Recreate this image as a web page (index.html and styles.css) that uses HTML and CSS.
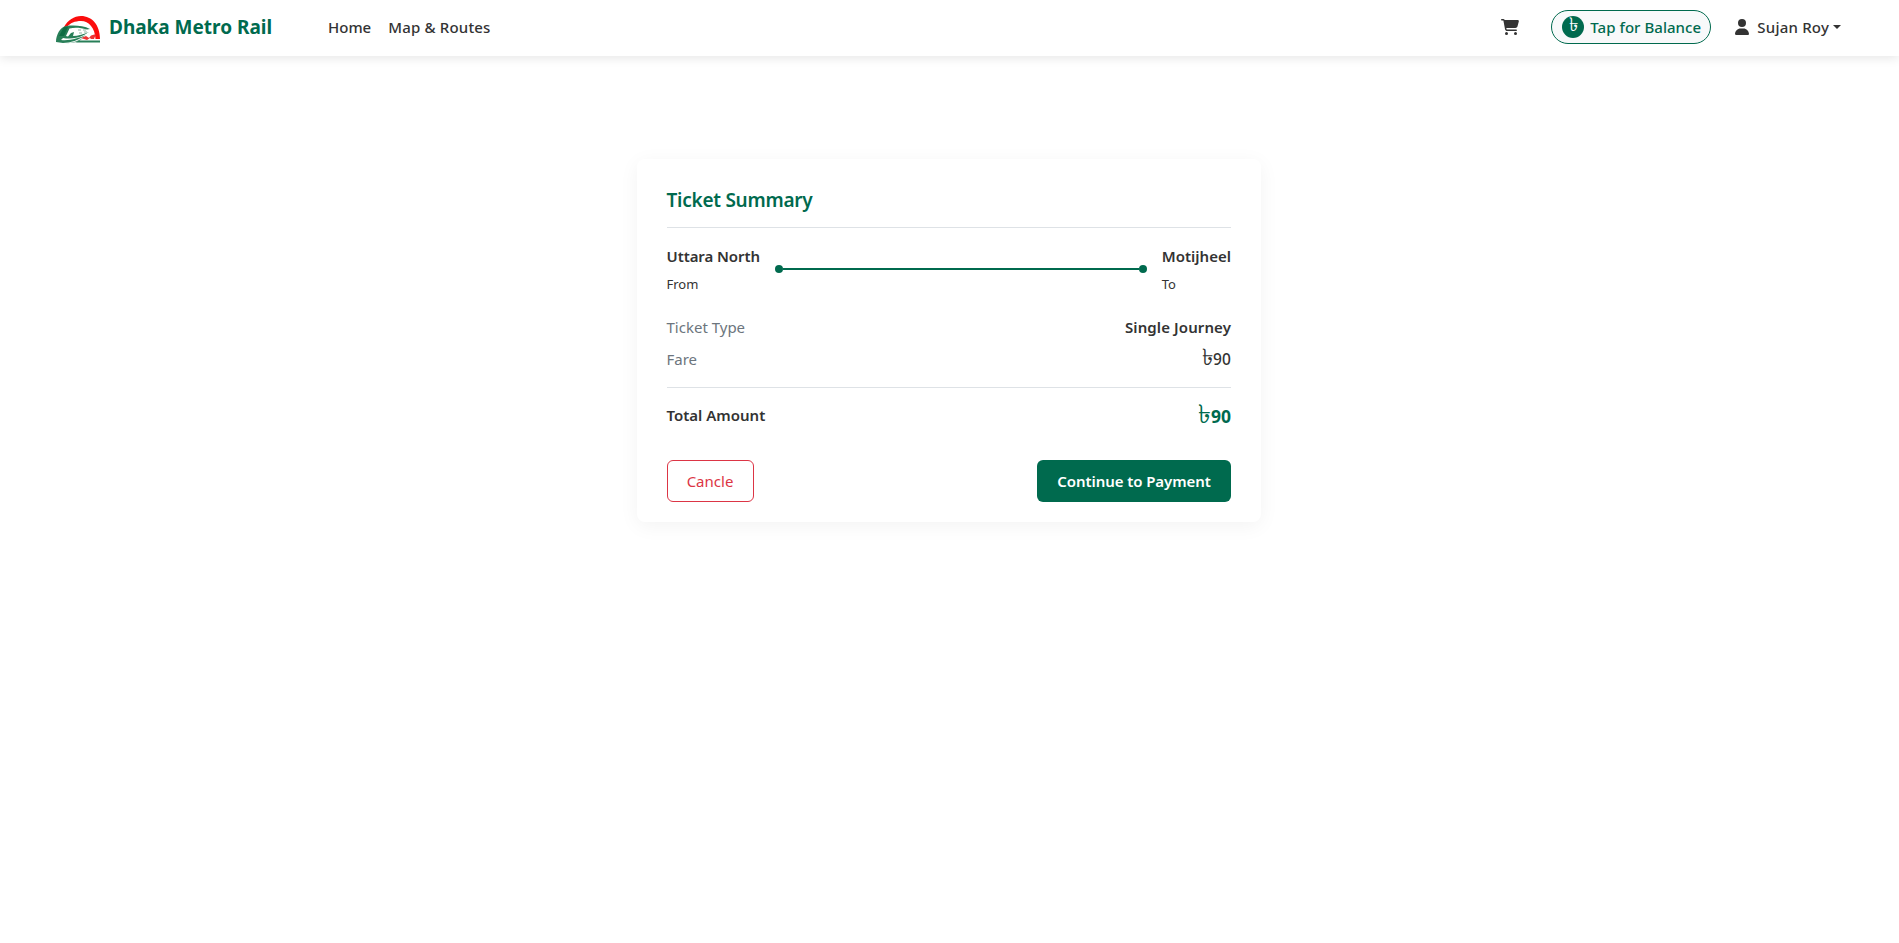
FILE: index.html
```html
<!DOCTYPE html>
<html lang="en">
<head>
<meta charset="utf-8">
<title>Dhaka Metro Rail</title>
<link rel="stylesheet" href="styles.css">
</head>
<body>
<header class="navbar">
  <a class="brand">
    <svg class="logo" viewBox="0 0 44 28">
      <path d="M8 11C12 4 18 0 25 0C36 0 44 9 44 23L39.500 23C39 12 33 5 25 5C19 5 14 7 11 11Z" fill="#fb0d0d"/>
      <path d="M25 22L30 20L33 22L35 19.500L40 18L38 23L35 23L34 22L31 24L28 23Z" fill="#ee3333"/>
      <path d="M0 26C0 19 4 11 10 10C18 9 27 9.500 34 13L31 13.500C24 11.500 19 11 13.500 12.500L10 20L12 20.500L15 17L18 16L17 20C22 20 28 18 33 16L28 19C20 23 13 23 7 22L5 24C14 25 23 22 30 19C23 24 14 27 7 27Z" fill="#287f58"/>
      <path d="M3 20L8 11L12 11L8 20Z" fill="#0e6c43"/>
      <path d="M9 27.500C16 27 22 25 27 22L22 26Z" fill="#55997a"/>
      <path d="M23 24.500H44V26.500H20Z" fill="#287f58"/>
      <path d="M22 14h3M27 14h3M23 17h3M28 16h3" stroke="#8fb8a5" stroke-width="1"/>
    </svg>
    <span class="brand-name">Dhaka Metro Rail</span>
  </a>
  <nav class="links"><a class="link">Home</a><a class="link map">Map &amp; Routes</a></nav>
  <div class="actions">
    <svg class="cart" viewBox="0 0 576 512"><path fill="#333" d="M0 24C0 10.700 10.700 0 24 0H69.500c22 0 41.500 12.800 50.600 32h411c26.300 0 45.500 25 38.600 50.400l-41 152.300c-8.500 31.400-37 53.300-69.500 53.300H170.700l5.400 28.500c2.200 11.300 12.100 19.500 23.600 19.500H488c13.300 0 24 10.700 24 24s-10.700 24-24 24H199.700c-34.600 0-64.300-24.600-70.700-58.500L77.400 54.500c-.7-3.800-4-6.500-7.900-6.500H24C10.700 48 0 37.300 0 24zM128 464a48 48 0 1 1 96 0 48 48 0 1 1-96 0zm336-48a48 48 0 1 1 0 96 48 48 0 1 1 0-96z"/></svg>
    <button class="balance"><span class="coin">৳</span><span>Tap for Balance</span></button>
    <div class="user">
      <svg class="person" viewBox="0 0 448 512"><path fill="#333" d="M224 256A128 128 0 1 0 224 0a128 128 0 1 0 0 256zm-45.700 48C79.800 304 0 383.800 0 482.300C0 498.700 13.300 512 29.700 512H418.300c16.400 0 29.700-13.300 29.700-29.700C448 383.800 368.200 304 269.700 304H178.300z"/></svg>
      <span class="user-name">Sujan Roy</span><span class="caret"></span>
    </div>
  </div>
</header>
<main class="card">
  <h1 class="title">Ticket Summary</h1>
  <section class="route">
    <div class="stop"><div class="station">Uttara North</div><div class="label">From</div></div>
    <div class="track"><i class="dot"></i><i class="line"></i><i class="dot"></i></div>
    <div class="stop"><div class="station destination">Motijheel</div><div class="label">To</div></div>
  </section>
  <section class="details">
    <div class="row"><span class="key">Ticket Type</span><span class="value">Single Journey</span></div>
    <div class="row"><span class="key">Fare</span><span class="value fare"><span class="taka">৳</span>90</span></div>
  </section>
  <section class="total"><span class="total-label">Total Amount</span><span class="total-value"><span class="taka">৳</span>90</span></section>
  <div class="buttons"><button class="btn cancel">Cancle</button><button class="btn pay">Continue to Payment</button></div>
</main>
</body>
</html>
```
FILE: styles.css
```css
*{box-sizing:border-box}
body{margin:0;min-height:100vh;background:#fff;color:#333;font-family:"Noto Sans","Open Sans",sans-serif;font-size:15px;line-height:24px}
.navbar{display:flex;align-items:center;height:56px;padding:0 58px 2px 56px;box-shadow:0 2px 10px rgba(0,0,0,.1);font-weight:500}
.brand{display:flex;align-items:center;gap:9px;width:272px}
.logo{width:44px;height:28px;margin-top:5px}
.brand-name{color:#006a4e;font-size:19px;font-weight:700;letter-spacing:-.02px;white-space:nowrap}
.links{display:flex;gap:17px}
.map{letter-spacing:.18px}
.actions{display:flex;align-items:center;margin-left:auto}
.cart{width:18px;height:16px;margin-right:32px}
.balance{display:flex;align-items:center;gap:6px;width:160px;height:34px;padding:0 0 0 10px;border:1px solid #006a4e;border-radius:17px;background:#f8f9fa;color:#006a4e;font:500 15px/24px "Noto Sans",sans-serif;letter-spacing:.04px;white-space:nowrap}
.coin{flex:none;width:22px;height:22px;border-radius:50%;background:#006a4e;color:#fff;font-size:19px;line-height:16px;text-align:center}
.user{display:flex;align-items:center;margin-left:24px}
.person{width:14px;height:16px;margin-right:8px}
.user-name{letter-spacing:.2px}
.caret{margin-left:4px;border:4.5px solid transparent;border-top-color:#333;border-bottom:0}
.card{width:624px;height:363px;margin:103px auto 0 637px;padding:28px 30px 20px 29.5px;border-radius:8px;box-shadow:0 4px 20px rgba(0,0,0,.05)}
.title{margin:0;height:41px;border-bottom:1px solid #dee2e6;color:#006a4e;font-size:19px;font-weight:600;line-height:26px;letter-spacing:-.25px}
.route{display:flex;align-items:center;padding-top:16px}
.station{height:28px;font-weight:600;letter-spacing:-.08px}
.destination{letter-spacing:.02px}
.label{font-size:13px}
.track{display:flex;align-items:center;flex:1;margin:0 15px 2px}
.dot{width:8px;height:8px;border-radius:50%;background:#006a4e}
.line{height:2px;flex:1;background:#006a4e}
.details{height:92px;padding-top:19px;border-bottom:1px solid #dee2e6}
.row,.total,.buttons{display:flex;justify-content:space-between}
.row{height:32px}
.key{color:#6c757d}
.value,.total-label{font-weight:600}
.value{letter-spacing:.1px}
.fare{font-size:15.5px;font-weight:500}
.total{height:72px;padding-top:15px}
.total-value{color:#006a4e;font-size:17.5px;font-weight:700;line-height:26px}
.taka{font-size:23px;font-weight:400;line-height:0}
.total .taka{font-size:26px}
.btn{height:42px;padding:0;border-radius:6px;font:400 15px/24px "Noto Sans",sans-serif}
.cancel{width:87px;border:1px solid #dc3545;background:#fff;color:#dc3545}
.pay{width:194px;border:0;background:#006a4e;color:#fff;font-weight:600;letter-spacing:-.08px}
```
